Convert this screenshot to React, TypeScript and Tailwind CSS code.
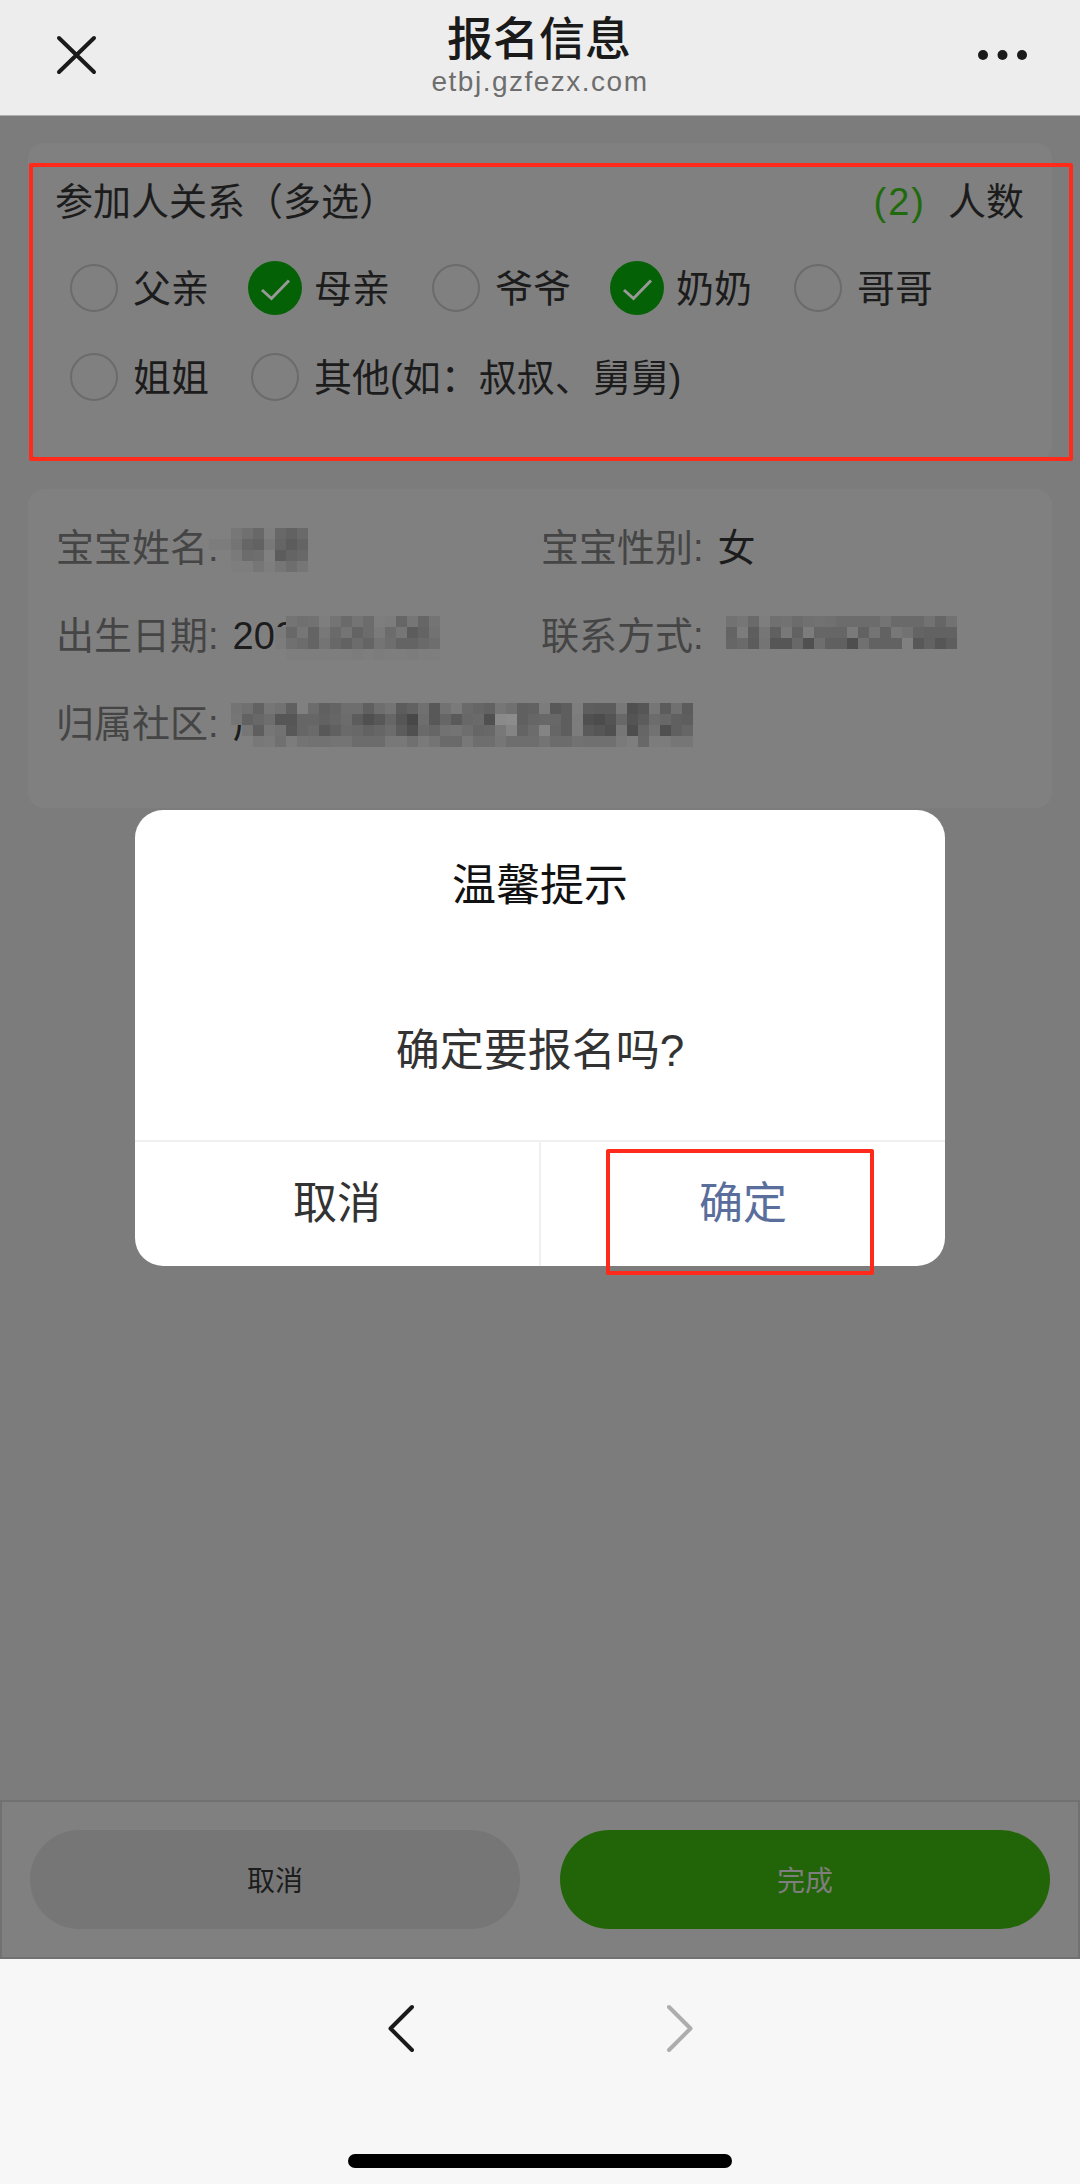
const pageFont = {
  fontFamily: '"Liberation Sans", "Noto Sans CJK SC", sans-serif',
};

const optionRows = [
  [
    { label: "父亲", checked: false },
    { label: "母亲", checked: true },
    { label: "爷爷", checked: false },
    { label: "奶奶", checked: true },
    { label: "哥哥", checked: false },
  ],
  [
    { label: "姐姐", checked: false },
    { label: "其他(如：叔叔、舅舅)", checked: false },
  ],
];

// hand-sampled greys of the blurred personal data, "--" = nothing painted
const nameMosaic = [
  "-- -- 77 70 68 7e 68 62 6a",
  "7c 7c 74 66 62 78 65 5c 64",
  "-- -- 7a 6c 6e 80 5c 64 68",
  "-- -- 7e 7e 76 7e 76 6e 76",
];
const birthMosaic = [
  "-- 74 70 72 7e 74 6a 74 6c 7e 7c 66 76 66 74",
  "7a 68 76 64 78 6a 74 64 6c 7a 6c 76 5c 64 72",
  "7c 70 6c 64 74 68 62 6c 64 74 6e 64 64 6a 6e",
  "-- 7e 7e 7e 7e 7e 7e 7c 7e 7c 7e 7e 7c 7e 7e",
];
const phoneMosaic = [
  "72 76 6a 7e 70 72 6c 70 72 70 6c 6c 6c 6c 74 6a 6a 6a 72 66 72",
  "64 7c 5e 76 60 78 62 7c 66 66 66 7a 62 74 62 78 72 64 62 62 62",
  "66 6a 5c 74 56 56 68 50 6e 60 60 4e 70 62 62 62 80 58 62 56 5e",
];
const addressMosaic = [
  "74 70 62 76 72 60 80 6c 60 64 6e 6e 60 6e 74 5c 62 70 58 72 7a 6a 66 62 76 70 60 62 7c 58 5e 7e 5e 5c 5c 78 50 56 76 5c 70 5c",
  "76 62 68 6e 56 56 66 66 62 66 6c 5c 50 58 66 56 48 6e 58 66 5a 68 6a 50 8a 8c 60 66 68 68 5e 7c 50 4c 54 68 54 5c 6c 68 60 5e",
  "-- 76 5e 76 72 58 66 6a 58 60 6a 68 62 66 6c 5c 50 6a 66 72 74 6e 66 68 78 84 64 6c 84 66 5e 7c 5a 56 50 76 4e 66 72 50 60 66",
  "-- 80 78 7a 70 7c 74 72 72 74 74 6c 6c 6c 78 78 70 7a 74 6a 6a 78 6e 6e 76 6e 6e 6e 74 6c 6c 72 70 70 70 7a 7e 68 7c 7c 76 76",
];

function Mosaic({ rows, className }: { rows: string[]; className: string }) {
  const cells = rows.map((row) => row.split(" "));
  const cols = cells[0].length;
  return (
    <svg
      width={cols * 11}
      height={rows.length * 11}
      shapeRendering="crispEdges"
      className={className}
    >
      {cells.map((row, y) =>
        row.map((grey, x) =>
          grey === "--" ? null : (
            <rect
              key={`${x}-${y}`}
              x={x * 11}
              y={y * 11}
              width={11}
              height={11}
              fill={`#${grey}${grey}${grey}`}
            />
          ),
        ),
      )}
    </svg>
  );
}

function Radio({ checked }: { checked: boolean }) {
  if (checked) {
    return (
      <div className="w-[54px] h-[54px] mx-[-3px] shrink-0 rounded-full bg-[#056105] flex items-center justify-center">
        <svg width="54" height="54" viewBox="0 0 54 54" fill="none">
          <path
            d="M14 29 L23.5 37.5 L41 19.5"
            stroke="#989898"
            strokeWidth="3"
          />
        </svg>
      </div>
    );
  }
  return (
    <div className="w-12 h-12 shrink-0 rounded-full border-2 border-[#6b6b6b]" />
  );
}

function Header() {
  return (
    <header className="h-[116px] shrink-0 bg-[#ededed] border-b border-[#b0b0b0] grid grid-cols-[1fr_auto_1fr] items-start">
      <div className="pl-[56px] pt-[35px]">
        <svg width="41" height="40" viewBox="0 0 41 40" fill="none">
          <path
            d="M3 3 L38 37 M38 3 L3 37"
            stroke="#1a1a1a"
            strokeWidth="4"
            strokeLinecap="round"
          />
        </svg>
      </div>
      <div className="flex flex-col items-center pt-[12px]">
        <div className="text-[46px] leading-[54px] font-medium text-[#1a1a1a] mr-[2px]">
          报名信息
        </div>
        <div className="text-[28px] leading-[30px] tracking-[1.5px] text-[#6e6e6e] mt-[1px]">
          etbj.gzfezx.com
        </div>
      </div>
      <div className="flex justify-end pr-[52px] pt-[50px]">
        <svg width="50" height="10" viewBox="0 0 50 10" fill="#1a1a1a">
          <circle cx="5" cy="5" r="5" />
          <circle cx="24.5" cy="5" r="5" />
          <circle cx="44" cy="5" r="5" />
        </svg>
      </div>
    </header>
  );
}

function RelationCard() {
  return (
    <section className="bg-[#808080] rounded-2xl pt-[36px] pb-[56px] pl-[27px] pr-[28px] text-[38px] text-[#1c1c1c]">
      <div className="flex items-center justify-between h-[42px] pt-[5px]">
        <span>参加人关系（多选）</span>
        <div className="flex items-center gap-[22px]">
          <span className="text-[#1f6a0c] tracking-[2px]">(2)</span>
          <span>人数</span>
        </div>
      </div>
      <div className="flex flex-col gap-[35px] mt-[40px] pl-[15px]">
        {optionRows.map((row, i) => (
          <div key={i} className="flex items-center h-[54px]">
            {row.map((opt) => (
              <div
                key={opt.label}
                className="w-[181px] shrink-0 flex items-center gap-[15px] whitespace-nowrap"
              >
                <Radio checked={opt.checked} />
                <span className="pt-[3px]">{opt.label}</span>
              </div>
            ))}
          </div>
        ))}
      </div>
    </section>
  );
}

function InfoCard() {
  const label = "text-[#454545] mr-[14px]";
  return (
    <section className="bg-[#808080] rounded-2xl pt-[36px] h-[319px] pl-[28px] text-[38px] leading-[44px] text-[#1c1c1c]">
      <div className="grid grid-cols-[485px_1fr] gap-y-[43px]">
        <div className="relative pt-[1px] whitespace-nowrap">
          <span className={label}>宝宝姓名:</span>
          <Mosaic rows={nameMosaic} className="absolute left-[153px] top-[3px]" />
        </div>
        <div className="pt-[1px] whitespace-nowrap">
          <span className={label}>宝宝性别:</span>
          <span>女</span>
        </div>
        <div className="relative pt-[1px] whitespace-nowrap">
          <span className={label}>出生日期:</span>
          <span>202</span>
          <Mosaic rows={birthMosaic} className="absolute left-[219px] top-[3px]" />
        </div>
        <div className="relative pt-[1px] whitespace-nowrap">
          <span className={label}>联系方式:</span>
          <Mosaic rows={phoneMosaic} className="absolute left-[185px] top-[3px]" />
        </div>
        <div className="relative col-span-2 pt-[1px] whitespace-nowrap">
          <span className={label}>归属社区:</span>
          <span>广</span>
          <Mosaic rows={addressMosaic} className="absolute left-[175px] top-[2px]" />
        </div>
      </div>
    </section>
  );
}

function ActionBar() {
  return (
    <div className="h-[159px] shrink-0 bg-[#808080] border-2 border-[#717171] flex items-center justify-between px-[28px] text-[28px]">
      <button className="w-[490px] h-[99px] pt-[4px] rounded-full bg-[#767676] text-[#1c1c1c]">
        取消
      </button>
      <button className="w-[490px] h-[99px] pt-[4px] rounded-full bg-[#226508] text-[#7e7e7e]">
        完成
      </button>
    </div>
  );
}

function BrowserBar() {
  return (
    <div className="flex-1 bg-[#f7f7f7] flex flex-col items-center">
      <div className="flex items-start gap-[253px] pt-[45px]">
        <svg width="26" height="48" viewBox="0 0 26 48" fill="none">
          <path
            d="M24 3 L2.5 24.5 L24 46"
            stroke="#1a1a1a"
            strokeWidth="4"
            strokeLinecap="round"
            strokeLinejoin="round"
          />
        </svg>
        <svg width="26" height="48" viewBox="0 0 26 48" fill="none">
          <path
            d="M2 3 L23.5 24.5 L2 46"
            stroke="#adadad"
            strokeWidth="4"
            strokeLinecap="round"
            strokeLinejoin="round"
          />
        </svg>
      </div>
      <div className="w-[384px] h-[14px] rounded-full bg-black mt-[102px]" />
    </div>
  );
}

function ConfirmDialog() {
  return (
    <div className="absolute left-[135px] top-[810px] w-[810px] h-[456px] bg-white rounded-[28px] flex flex-col overflow-hidden text-[44px]">
      <div className="h-[332px] flex flex-col items-center border-b-2 border-[#f0f0f0]">
        <div className="mt-[50px] leading-[52px] text-[#111111]">温馨提示</div>
        <div className="mt-[113px] leading-[52px] text-[#333333]">确定要报名吗?</div>
      </div>
      <div className="flex-1 flex">
        <button className="flex-1 border-r-2 border-[#f0f0f0] text-[#333333]">取消</button>
        <button className="flex-1 text-[#5a6e9c]">确定</button>
      </div>
    </div>
  );
}

export default function App() {
  return (
    <div
      className="relative w-[1080px] h-[2184px] flex flex-col overflow-hidden bg-[#7c7c7c]"
      style={pageFont}
    >
      <Header />
      <main className="flex-1 flex flex-col gap-[29px] px-[28px] pt-[27px]">
        <RelationCard />
        <InfoCard />
      </main>
      <ActionBar />
      <div className="h-[225px] shrink-0 flex">
        <BrowserBar />
      </div>
      <ConfirmDialog />
      {/* red annotation boxes drawn on the screenshot */}
      <div className="absolute left-[29px] top-[163px] w-[1044px] h-[298px] border-4 border-[#ff2a1a] rounded-[2px]" />
      <div className="absolute left-[606px] top-[1149px] w-[268px] h-[126px] border-4 border-[#ff2a1a] rounded-[2px]" />
    </div>
  );
}
